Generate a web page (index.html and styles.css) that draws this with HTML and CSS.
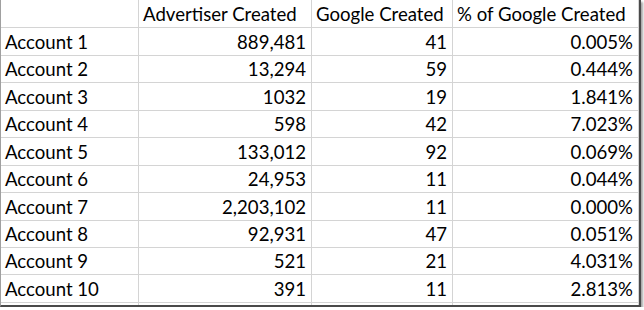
FILE: index.html
```html
<!DOCTYPE html>
<html>
<head>
<meta charset="utf-8">
<link rel="stylesheet" href="styles.css">
</head>
<body>
<div class="frame">
  <div class="sheet">
    <div class="c"></div><div class="c">Advertiser Created</div><div class="c">Google Created</div><div class="c">% of Google Created</div>
    <div class="c">Account 1</div><div class="c n">889,481</div><div class="c n">41</div><div class="c n">0.005%</div>
    <div class="c">Account 2</div><div class="c n">13,294</div><div class="c n">59</div><div class="c n">0.444%</div>
    <div class="c">Account 3</div><div class="c n">1032</div><div class="c n">19</div><div class="c n">1.841%</div>
    <div class="c">Account 4</div><div class="c n">598</div><div class="c n">42</div><div class="c n">7.023%</div>
    <div class="c">Account 5</div><div class="c n">133,012</div><div class="c n">92</div><div class="c n">0.069%</div>
    <div class="c">Account 6</div><div class="c n">24,953</div><div class="c n">11</div><div class="c n">0.044%</div>
    <div class="c">Account 7</div><div class="c n">2,203,102</div><div class="c n">11</div><div class="c n">0.000%</div>
    <div class="c">Account 8</div><div class="c n">92,931</div><div class="c n">47</div><div class="c n">0.051%</div>
    <div class="c">Account 9</div><div class="c n">521</div><div class="c n">21</div><div class="c n">4.031%</div>
    <div class="c">Account 10</div><div class="c n">391</div><div class="c n">11</div><div class="c n">2.813%</div>
    <div class="c p"></div><div class="c p"></div><div class="c p"></div><div class="c p"></div>
  </div>
</div>
</body>
</html>
```
FILE: styles.css
```css
html, body {
  margin: 0;
  padding: 0;
  background: #ffffff;
}
.frame {
  width: 638px;
  border-left: 1px solid #a0a0a0;
  border-right: 2px solid #4a4a4a;
  border-bottom: 2px solid #4a4a4a;
  box-shadow: 2px 2px 2px rgba(0,0,0,0.35);
  overflow: hidden;
}
.sheet {
  display: grid;
  grid-template-columns: 138px 173px 141px 186px;
  grid-template-rows: 28px 28px 27px 28px 27px 28px 27px 28px 27px 27px 28px 2px;
  font-family: Lato, "Liberation Sans", sans-serif;
  font-size: 18.6px;
  color: #000;
}
.c {
  box-sizing: border-box;
  border-right: 1px solid #d4d4d4;
  border-bottom: 1px solid #d4d4d4;
  display: flex;
  align-items: flex-end;
  padding: 0 4px 3px 4px;
  line-height: 20px;
  white-space: nowrap;
  overflow: hidden;
}
.n {
  justify-content: flex-end;
  padding-right: 5px;
}
.p {
  border-bottom: 0;
  padding: 0;
}
```
